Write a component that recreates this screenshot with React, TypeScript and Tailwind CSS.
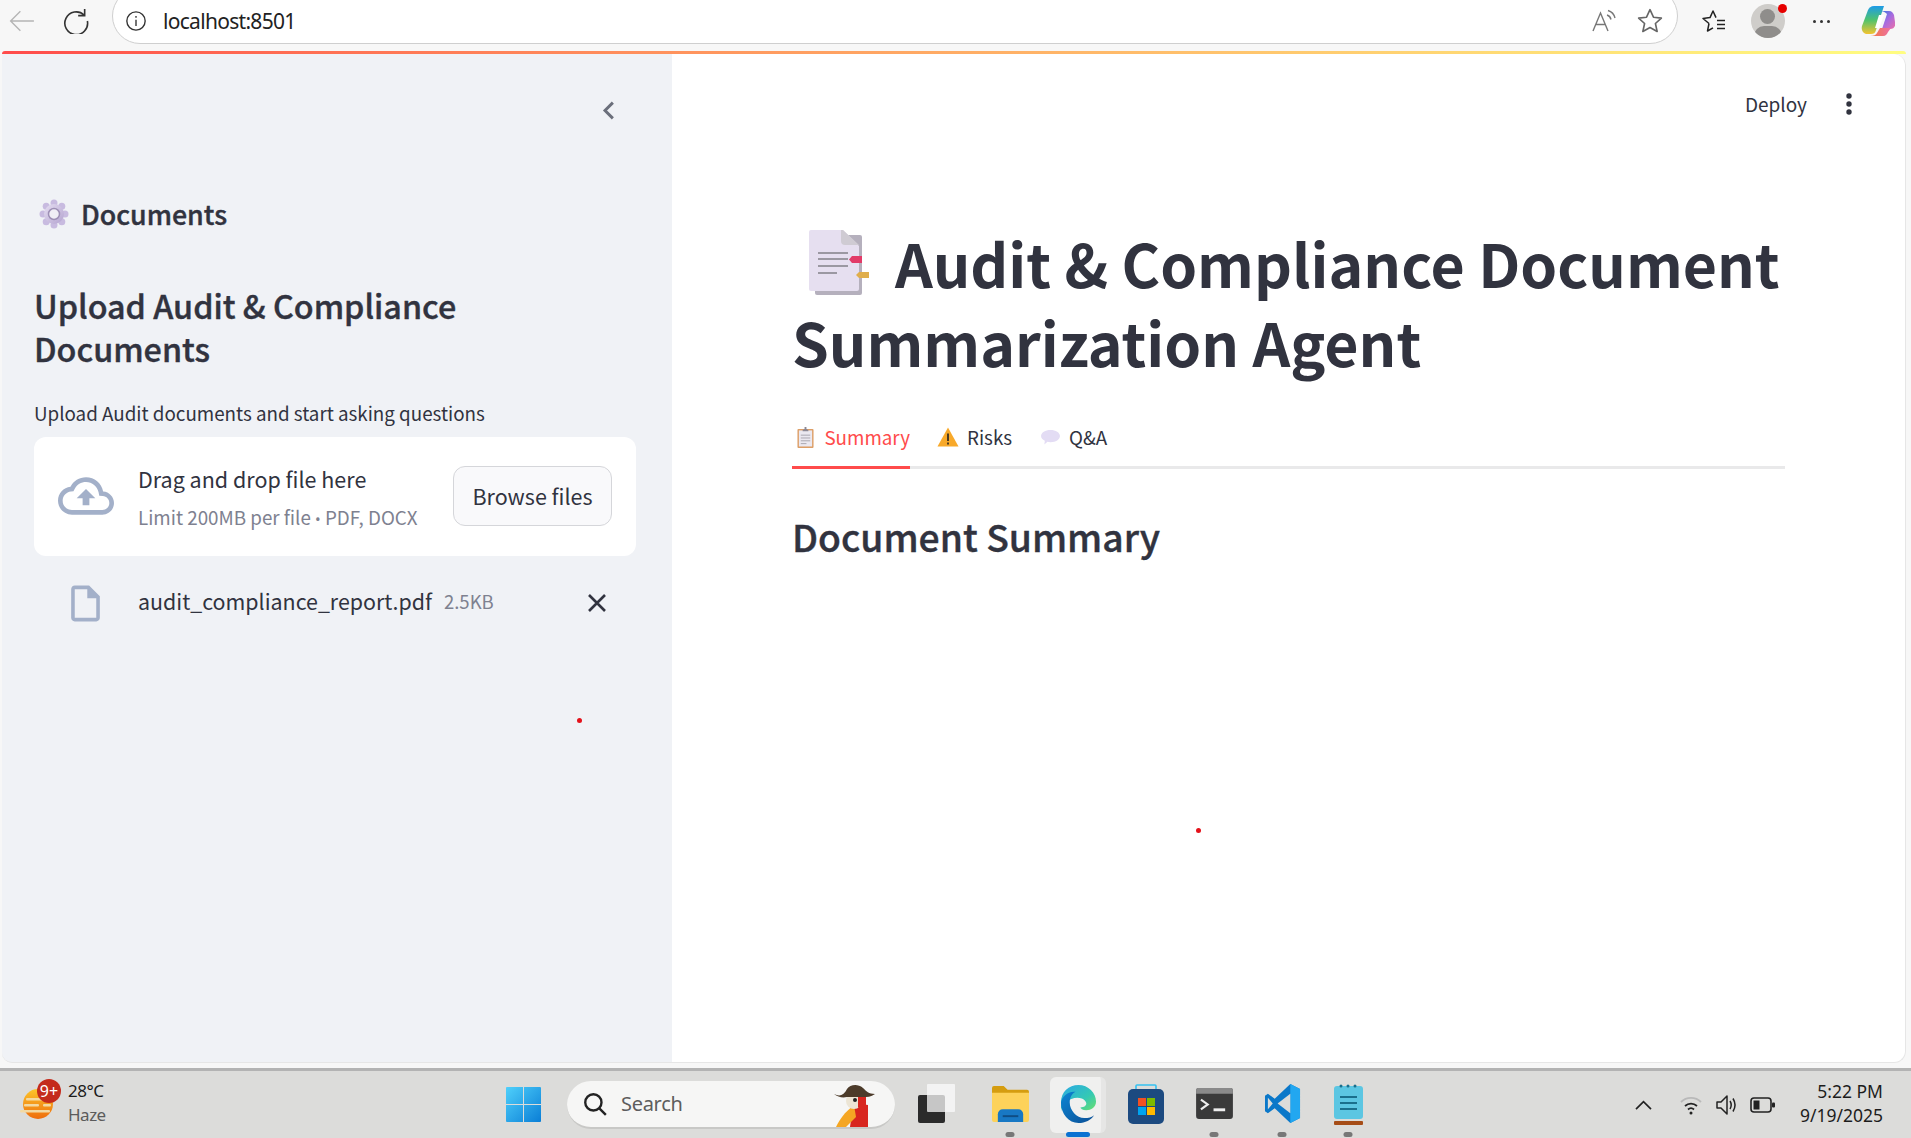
import React from "react";

function Memo({ className }: { className?: string }) {
  return (
    <svg viewBox="0 0 62 66" className={className}>
      <rect x="8" y="5" width="47" height="60" rx="2" fill="#b5b0bd" />
      <path d="M2 2a2 2 0 0 1 2-2h32l16 16v43a2 2 0 0 1-2 2H4a2 2 0 0 1-2-2z" fill="#e6dff0" />
      <path d="M34 0h2l16 15H38a4 4 0 0 1-4-4z" fill="#cfcbd3" />
      <g fill="#9b98a2">
        <rect x="11" y="22" width="30" height="2" />
        <rect x="11" y="28" width="30" height="2" />
        <rect x="11" y="35" width="30" height="2" />
        <rect x="11" y="42" width="19" height="2" />
      </g>
      <path d="M45 26h10v7H45l-3-3.500z" fill="#e23a68" />
      <path d="M52 42h12v6H52l-3-3z" fill="#e0ae4c" />
    </svg>
  );
}

function Gear({ className }: { className?: string }) {
  return (
    <svg viewBox="0 0 30 30" className={className}>
      <defs>
        <linearGradient id="g1" x1="0" y1="0" x2="1" y2="1">
          <stop offset="0" stopColor="#e6dff2" />
          <stop offset="1" stopColor="#b3a3cf" />
        </linearGradient>
      </defs>
      <g fill="#c8bbe0">
        <circle cx="15" cy="4" r="3.500" />
        <circle cx="15" cy="26" r="3.500" />
        <circle cx="4" cy="15" r="3.500" />
        <circle cx="26" cy="15" r="3.500" />
        <circle cx="7.200" cy="7.200" r="3.500" />
        <circle cx="22.800" cy="7.200" r="3.500" />
        <circle cx="7.200" cy="22.800" r="3.500" />
        <circle cx="22.800" cy="22.800" r="3.500" />
      </g>
      <circle cx="15" cy="15" r="10" fill="url(#g1)" />
      <circle cx="15" cy="15" r="5.500" fill="#f0eef5" stroke="#9d8fb5" strokeWidth="1.500" />
    </svg>
  );
}

function Clipboard() {
  return (
    <svg viewBox="0 0 18 22" className="w-[17px] h-[21px]">
      <rect x="0.500" y="2" width="17" height="20" rx="1" fill="#dd9e66" />
      <rect x="2" y="3.500" width="14" height="17" fill="#ebe8f0" />
      <path d="M6 3l2-1V0h2v2l2 1v1.500H6z" fill="#8b8794" />
      <g fill="#a7a4ad">
        <rect x="4" y="8" width="10" height="1" />
        <rect x="4" y="11" width="10" height="1" />
        <rect x="4" y="14" width="10" height="1" />
        <rect x="4" y="17" width="6" height="1" />
      </g>
    </svg>
  );
}

function Warning() {
  return (
    <svg viewBox="0 0 22 20" className="w-[22px] h-[20px]">
      <path d="M11 0.500L21.500 19.500H0.500z" fill="#f8a92a" />
      <rect x="10" y="6.500" width="2" height="7.500" fill="#4b3a22" />
      <rect x="10" y="15.500" width="2" height="2" fill="#4b3a22" />
    </svg>
  );
}

function Bubble() {
  return (
    <svg viewBox="0 0 22 18" className="w-[21px] h-[17px]">
      <path d="M11 1c5.500 0 10 2.700 10 6.500S16.500 14 11 14c-1.200 0-2.200-.1-3.200-.4L4.500 16.500 5 12.500C2.500 11.400 1 9.600 1 7.500 1 3.700 5.500 1 11 1z" fill="#e3dcf4" />
    </svg>
  );
}

function Dot({ className }: { className: string }) {
  return <span className={`block rounded-full bg-[#e4111a] w-[5px] h-[5px] ${className}`} />;
}

function Browser() {
  return (
    <div className="h-[51px] shrink-0 flex items-center bg-[#f7f7f7] relative pb-[9px]">
      <svg viewBox="0 0 24 24" className="w-[26px] h-[26px] ml-[9px] text-[#b5b5b5]" fill="none" stroke="currentColor" strokeWidth="1.300">
        <path d="M23 12H1.500M10.500 3l-9 9 9 9" />
      </svg>
      <svg viewBox="0 0 24 24" className="w-[26px] h-[26px] ml-[28px] text-[#333]" fill="none" stroke="currentColor" strokeWidth="1.500">
        <path d="M19.500 6.500A10.500 10.500 0 1 0 22.500 12" />
        <path d="M20 1v6h-6" />
      </svg>
      <div className="ml-[23px] w-[1566px] h-[56px] mt-[-11px] pt-[11px] border border-[#cfcfcf] rounded-[30px] bg-white flex items-center">
        <svg viewBox="0 0 24 24" className="w-[22px] h-[22px] ml-[12px] text-[#333]" fill="none" stroke="currentColor" strokeWidth="1.500">
          <circle cx="12" cy="12" r="10" />
          <path d="M12 10.500V17.500M12 6.500v2" />
        </svg>
        <span className="ml-[16px] text-[21px] leading-[28px] text-[#222] font-['Noto_Sans',sans-serif] tracking-[-0.7px]">localhost:8501</span>
        <svg viewBox="0 0 26 24" className="w-[26px] h-[24px] ml-auto text-[#777]" fill="none" stroke="currentColor" strokeWidth="1.400">
          <path d="M1 22L8.500 4 16 22M4 15.500h9" />
          <path d="M16 1.500c3.500 1 6 3.500 7 7.500M15 6c2 .6 3.500 2 4 4.500" />
        </svg>
        <svg viewBox="0 0 24 24" className="w-[26px] h-[26px] ml-[19px] mr-[14px] text-[#666]" fill="none" stroke="currentColor" strokeWidth="1.500" strokeLinejoin="round">
          <path d="M12 1.500l3.200 7 7.300.8-5.500 5 1.600 7.400L12 18l-6.600 3.700L7 14.300l-5.500-5 7.300-.8z" />
        </svg>
      </div>
      <svg viewBox="0 0 26 24" className="w-[26px] h-[24px] ml-[23px] text-[#222]" fill="none" stroke="currentColor" strokeWidth="1.500" strokeLinejoin="round">
        <path d="M8 14.500L2 9.500l7-.9L12 2l3 6.600M8 14.500L6.500 22l5.500-3.200" />
        <path d="M16 11.500h8M16 15.500h8M16 19.500h8" />
      </svg>
      <div className="ml-[24px] w-[34px] h-[34px] rounded-full bg-[#cfcdca] relative overflow-hidden">
        <span className="absolute left-[9px] top-[5px] w-[15px] h-[15px] rounded-full bg-[#8f8d8b]" />
        <span className="absolute left-[3px] top-[22px] w-[28px] h-[20px] rounded-full bg-[#8f8d8b]" />
      </div>
      <span className="absolute left-[1778px] top-[4px] w-[9px] h-[9px] rounded-full bg-[#e60000]" />
      <div className="ml-[28px] flex gap-[4px]">
        <span className="w-[3px] h-[3px] rounded-full bg-[#333]" />
        <span className="w-[3px] h-[3px] rounded-full bg-[#333]" />
        <span className="w-[3px] h-[3px] rounded-full bg-[#333]" />
      </div>
      <svg viewBox="0 0 34 32" className="w-[34px] h-[32px] ml-[31px]">
        <defs>
          <linearGradient id="cp1" x1="0" y1="0" x2="0" y2="1">
            <stop offset="0" stopColor="#1e9be8" />
            <stop offset="0.500" stopColor="#4fc36d" />
            <stop offset="1" stopColor="#f4c430" />
          </linearGradient>
          <linearGradient id="cp2" x1="0" y1="0" x2="1" y2="1">
            <stop offset="0" stopColor="#2a7de1" />
            <stop offset="0.500" stopColor="#a66be0" />
            <stop offset="1" stopColor="#ec6fa8" />
          </linearGradient>
          <linearGradient id="cp3" x1="0" y1="0" x2="1" y2="0">
            <stop offset="0" stopColor="#f47a3a" />
            <stop offset="1" stopColor="#ec6fa8" />
          </linearGradient>
        </defs>
        <path d="M13 1h10l-8 24c-1 3-2 4-5 4H5c-3-1-5-4-4-8L7 5c1-2 3-4 6-4z" fill="url(#cp1)" />
        <path d="M19 6h9c3 0 4 2 5 4l1 7c1 4-1 7-5 7h-8l5-15c-2-2-4-3-7-3z" fill="url(#cp2)" />
        <path d="M9 31h13c3 0 4-2 5-4l3-4h-11l-3 5c-1 2-3 3-7 3z" fill="url(#cp3)" />
        <path d="M18 10h5l-5 13h-4z" fill="#fff" />
      </svg>
    </div>
  );
}

function Sidebar() {
  return (
    <aside className="w-[670px] shrink-0 bg-[#f0f2f6] rounded-bl-[10px] border-b border-[#e6e6e6] relative">
      <div className="h-[114px] flex justify-end items-center pr-[49px]">
        <svg viewBox="0 0 24 24" className="w-[27px] h-[27px] text-[#6b6f7b] mt-[-2px]" fill="none" stroke="currentColor" strokeWidth="2.600">
          <path d="M15 5l-7 7 7 7" />
        </svg>
      </div>
      <div className="pl-[32px] pr-[36px]">
        <div className="flex items-center h-[40px] mt-[26px]">
          <Gear className="w-[30px] h-[30px] ml-[5px]" />
          <span className="ml-[12px] text-[26.8px] leading-[40px] font-medium [-webkit-text-stroke:0.4px_#31333f] text-[#31333f]">Documents</span>
        </div>
        <h2 className="mt-[50px] text-[32.3px] leading-[43px] font-medium [-webkit-text-stroke:0.4px_#31333f] text-[#31333f] whitespace-nowrap">
          Upload Audit &amp; Compliance
          <br />
          Documents
        </h2>
        <p className="mt-[27px] text-[18.8px] leading-[32px] text-[#31333f]">Upload Audit documents and start asking questions</p>
        <div className="mt-[8px] h-[119px] bg-white rounded-[12px] flex items-center">
          <svg viewBox="0 0 24 24" className="w-[56px] h-[56px] ml-[24px] mt-[-2px] text-[#a3b0c9]" fill="currentColor">
            <path d="M19.350 10.040C18.670 6.590 15.640 4 12 4 9.110 4 6.600 5.640 5.350 8.040 2.340 8.360 0 10.910 0 14c0 3.310 2.690 6 6 6h13c2.760 0 5-2.240 5-5 0-2.640-2.050-4.780-4.650-4.960zM19 18H6c-2.210 0-4-1.790-4-4 0-2.050 1.530-3.760 3.560-3.970l1.070-.11.500-.95C8.080 7.140 9.940 6 12 6c2.620 0 4.880 1.860 5.390 4.430l.3 1.500 1.530.11c1.560.1 2.780 1.410 2.780 2.960 0 1.650-1.350 3-3 3zM8 13h2.550v3h2.900v-3H16l-4-4z" />
          </svg>
          <div className="ml-[24px] flex flex-col pt-[4px]">
            <span className="text-[21.5px] leading-[32px] text-[#31333f]">Drag and drop file here</span>
            <span className="mt-[6px] text-[18.8px] leading-[32px] text-[#7e8190]">
              Limit 200MB per file <span className="font-['Noto_Sans',sans-serif] text-[15px]">•</span> PDF, DOCX
            </span>
          </div>
          <button className="ml-auto mr-[24px] w-[159px] h-[60px] mt-[-2px] rounded-[12px] border border-[#d5d6da] bg-[#f9f9fb] text-[21.5px] leading-[32px] text-[#31333f]">Browse files</button>
        </div>
        <div className="mt-[25px] h-[44px] flex items-center">
          <svg viewBox="0 0 24 24" className="w-[43px] h-[43px] ml-[30px] text-[#a3b0c9]" fill="currentColor">
            <path d="M14 2H6c-1.100 0-1.990.9-1.990 2L4 20c0 1.100.89 2 1.990 2H18c1.100 0 2-.9 2-2V8l-6-6zM6 20V4h7v5h5v11H6z" />
          </svg>
          <span className="ml-[31px] mt-[-4px] text-[21.4px] leading-[32px] text-[#31333f]">audit_compliance_report.pdf</span>
          <span className="ml-[12px] mt-[-4px] text-[18.5px] leading-[32px] text-[#7e8190]">2.5KB</span>
          <svg viewBox="0 0 24 24" className="w-[24px] h-[24px] ml-auto mr-[27px] text-[#31333f]" fill="none" stroke="currentColor" strokeWidth="2.600">
            <path d="M4 4l16 16M20 4L4 20" />
          </svg>
        </div>
      </div>
      <Dot className="absolute left-[575px] top-[664px]" />
    </aside>
  );
}

function Tab({ icon, label, active, className }: { icon: React.ReactNode; label: string; active?: boolean; className?: string }) {
  return (
    <div className={`flex items-center h-[61px] border-b-[3px] -mb-[3px] ${active ? "border-[#ff4b4b] text-[#ff4b4b]" : "border-transparent text-[#31333f]"} ${className ?? ""}`}>
      <span className="flex items-center justify-center w-[22px]">{icon}</span>
      <span className="ml-[8px] text-[18.8px] leading-[32px]">{label}</span>
    </div>
  );
}

function Main() {
  return (
    <main className="flex-1 bg-white rounded-tr-[12px] rounded-br-[12px] border-r border-b border-[#e6e6e6] relative min-w-0">
      <header className="h-[100px] flex items-center justify-end">
        <span className="text-[19px] leading-[30px] text-[#31333f]">Deploy</span>
        <svg viewBox="0 0 6 22" className="w-[6px] h-[22px] ml-[39px] mr-[53px] text-[#31333f]" fill="currentColor">
          <circle cx="3" cy="3" r="2.700" />
          <circle cx="3" cy="11" r="2.700" />
          <circle cx="3" cy="19" r="2.700" />
        </svg>
      </header>
      <div className="pl-[120px] pr-[120px] pt-[69px]">
        <h1 className="text-[59px] leading-[79px] font-bold text-[#31333f] whitespace-nowrap">
          <Memo className="inline-block w-[62px] h-[66px] ml-[15px] mr-[26px] align-[-8px]" />
          Audit &amp; Compliance Document
          <br />
          Summarization Agent
        </h1>
        <div className="mt-[27px] flex border-b-[3px] border-[#e9e9ea]">
          <Tab active icon={<Clipboard />} label="Summary" className="pl-[3px] w-[118px]" />
          <Tab icon={<Warning />} label="Risks" className="ml-[27px]" />
          <Tab icon={<Bubble />} label="Q&A" className="ml-[27px]" />
        </div>
        <h2 className="mt-[42px] text-[37.3px] leading-[50px] font-medium [-webkit-text-stroke:0.4px_#31333f] text-[#31333f]">Document Summary</h2>
      </div>
      <Dot className="absolute left-[524px] top-[774px]" />
    </main>
  );
}

function Win() {
  return (
    <svg viewBox="0 0 36 38" className="w-[35px] h-[37px]">
      <defs>
        <linearGradient id="w1" x1="0" y1="0" x2="1" y2="1">
          <stop offset="0" stopColor="#4fd0fb" />
          <stop offset="1" stopColor="#0a7ed6" />
        </linearGradient>
      </defs>
      <path d="M1 1h16.500v17.500H0V2a1 1 0 0 1 1-1zM18.500 1H35a1 1 0 0 1 1 1v16.500H18.500zM0 19.500h17.500V37H1a1 1 0 0 1-1-1zM18.500 19.500H36V36a1 1 0 0 1-1 1H18.500z" fill="url(#w1)" />
    </svg>
  );
}

function TaskIcon({ children, pip, active, w }: { children: React.ReactNode; pip?: boolean; active?: boolean; w?: string }) {
  return (
    <div className={`relative h-[64px] mt-[-2px] flex items-center justify-center ${w ?? "w-[68px]"}`}>
      {active && <span className="absolute left-[6px] right-[6px] top-[5px] bottom-[3px] bg-[#f0f0ef] rounded-[6px] border-r-[5px] border-[#e6e6e5]" />}
      <span className="relative flex">{children}</span>
      {pip && <span className="absolute bottom-[-1px] left-1/2 -translate-x-1/2 w-[9px] h-[5px] rounded-full bg-[#777]" />}
      {active && <span className="absolute bottom-[-1px] left-1/2 -translate-x-1/2 w-[24px] h-[5px] rounded-full bg-[#0a72d2]" />}
    </div>
  );
}

function Taskbar() {
  return (
    <footer className="h-[70px] shrink-0 border-t-[3px] border-[#b3b3b3] bg-[#dcdcda] flex items-center font-['Noto_Sans',sans-serif] text-[#1c1c1c]">
      <div className="relative w-[68px] h-full shrink-0">
        <svg viewBox="0 0 34 34" className="absolute left-[20px] top-[18px] w-[34px] h-[34px]">
          <defs>
            <linearGradient id="sun" x1="0" y1="0" x2="0" y2="1">
              <stop offset="0" stopColor="#fcc52a" />
              <stop offset="1" stopColor="#ee6d0d" />
            </linearGradient>
          </defs>
          <circle cx="18" cy="15" r="15" fill="url(#sun)" />
          <g fill="#f3d9a2">
            <rect x="6" y="9" width="24" height="2.500" rx="1" />
            <rect x="4" y="15" width="15" height="2.500" rx="1" />
            <rect x="23" y="15" width="8" height="2.500" rx="1" />
            <rect x="0" y="21" width="30" height="2.500" rx="1" />
          </g>
        </svg>
        <span className="absolute left-[37px] top-[8px] w-[24px] h-[24px] rounded-full bg-[#c42b1c] text-white text-[16px] leading-[24px] text-center">9+</span>
      </div>
      <div className="flex flex-col w-[438px] shrink-0 mt-[-3px]">
        <span className="text-[17px] leading-[24px] tracking-[-0.5px]">28°C</span>
        <span className="text-[17px] leading-[24px] tracking-[-0.5px] text-[#5b5b5b]">Haze</span>
      </div>
      <Win />
      <div className="ml-[26px] w-[328px] h-[48px] rounded-full bg-[#f6f6f5] border-b-2 border-[#c8c8c6] flex items-center shrink-0 relative">
        <svg viewBox="0 0 24 24" className="w-[26px] h-[26px] ml-[15px] text-[#222]" fill="none" stroke="currentColor" strokeWidth="2.200">
          <circle cx="10.500" cy="10.500" r="7.500" />
          <path d="M16 16l6 6" />
        </svg>
        <span className="ml-[13px] text-[20px] leading-[28px] text-[#5d5d5d] tracking-[-0.3px]">Search</span>
        <svg viewBox="0 0 42 44" className="absolute right-[19px] top-[2px] w-[42px] h-[44px]">
          <path d="M16 44C18 34 16 26 20 20l14 2v22z" fill="#d8261f" />
          <path d="M2 44c4-8 8-14 18-22l2 12-10 10z" fill="#f5a623" />
          <circle cx="20" cy="18" r="8" fill="#ece5d5" />
          <circle cx="21" cy="17" r="2" fill="#222" />
          <path d="M24 14h8v10l-4 6-4-6z" fill="#d8261f" />
          <path d="M0 11c6 3 10 1 13-5 3-4 10-6 16-1 3 3 6 6 12 6-4 3-8 3-12 3H13c-5 1-9 0-13-3z" fill="#4c3b2a" />
        </svg>
      </div>
      <div className="ml-[2px] flex items-center shrink-0">
        <TaskIcon w="w-[79px]">
          <svg viewBox="0 0 38 40" className="w-[38px] h-[40px]">
            <rect x="0" y="11" width="27" height="28" rx="2" fill="#2b2b2b" />
            <rect x="9" y="0" width="28" height="28" rx="1" fill="#fbfbfb" fillOpacity="0.750" />
          </svg>
        </TaskIcon>
        <TaskIcon pip>
          <svg viewBox="0 0 38 38" className="w-[37px] h-[37px]">
            <path d="M0 3a2 2 0 0 1 2-2h10l4 4h20a2 2 0 0 1 2 2v4H0z" fill="#d59d10" />
            <path d="M0 8h38v28a2 2 0 0 1-2 2H2a2 2 0 0 1-2-2z" fill="#fdd25a" />
            <path d="M6 38V30a5 5 0 0 1 5-5h16a5 5 0 0 1 5 5v8z" fill="#1878c4" />
            <rect x="11" y="31" width="16" height="2" fill="#0f4d85" />
          </svg>
        </TaskIcon>
        <TaskIcon active>
          <svg viewBox="0 0 38 42" className="w-[37px] h-[41px]">
            <defs>
              <linearGradient id="ed1" x1="0" y1="0" x2="1" y2="1">
                <stop offset="0" stopColor="#2aa8e6" />
                <stop offset="0.600" stopColor="#34c9b4" />
                <stop offset="1" stopColor="#6fe06a" />
              </linearGradient>
              <linearGradient id="ed2" x1="0" y1="0" x2="1" y2="1">
                <stop offset="0" stopColor="#0c86d4" />
                <stop offset="1" stopColor="#0c4f96" />
              </linearGradient>
            </defs>
            <path d="M1 20C1 9 9 2 19 2c10 0 18 8 18 17 0 6-5 9-10 9-4 0-6-2-6-3 4 0 6-2 6-4 0-3-4-6-9-6-9 0-16 7-17 14z" fill="url(#ed1)" />
            <path d="M1 20c1-6 7-12 15-11-4 2-6 6-6 11 0 8 7 16 15 16 4 0 8-1 10-3-3 5-9 8-16 8C9 41 1 32 1 20z" fill="url(#ed2)" />
          </svg>
        </TaskIcon>
        <TaskIcon>
          <svg viewBox="0 0 36 40" className="w-[36px] h-[40px]">
            <path d="M8 6V2a1 1 0 0 1 1-1h18a1 1 0 0 1 1 1v4" fill="none" stroke="#35c1f1" strokeWidth="1.600" />
            <rect x="0" y="5" width="36" height="35" rx="5" fill="#1c4a80" />
            <rect x="10" y="14" width="8" height="8" fill="#f25022" />
            <rect x="19" y="14" width="8" height="8" fill="#7fba00" />
            <rect x="10" y="23" width="8" height="8" fill="#00a4ef" />
            <rect x="19" y="23" width="8" height="8" fill="#ffb900" />
          </svg>
        </TaskIcon>
        <TaskIcon pip>
          <svg viewBox="0 0 38 32" className="w-[37px] h-[31px]">
            <rect width="38" height="32" rx="3" fill="#3a3a3a" />
            <path d="M2 0h34a2 2 0 0 1 2 2v4H0V2a2 2 0 0 1 2-2z" fill="#8a8a8a" />
            <path d="M5 12l7 5-7 5" stroke="#eee" strokeWidth="2.200" fill="none" />
            <rect x="18" y="21" width="12" height="3" fill="#eee" />
          </svg>
        </TaskIcon>
        <TaskIcon pip>
          <svg viewBox="0 0 38 42" className="w-[37px] h-[41px]">
            <path d="M27 1l10 5v30l-10 5-16-15-7 5-3-2V13l3-2 7 5z" fill="#0b78c9" />
            <path d="M27 1l10 5v30l-10 5z" fill="#22a7f0" />
            <path d="M27 11v20L14 21z" fill="#dcdcda" />
            <path d="M4 15l5 6-5 6z" fill="#dcdcda" />
          </svg>
        </TaskIcon>
        <TaskIcon pip w="w-[64px]">
          <svg viewBox="0 0 29 42" className="w-[29px] h-[42px]">
            <rect y="3" width="29" height="33" rx="3" fill="#5cc6e2" />
            <g fill="#1a6f8c">
              <circle cx="7" cy="3" r="1.500" />
              <circle cx="14" cy="3" r="1.500" />
              <circle cx="21" cy="3" r="1.500" />
              <rect x="6" y="13" width="17" height="2" />
              <rect x="6" y="19" width="17" height="2" />
              <rect x="6" y="25" width="17" height="2" />
            </g>
            <rect y="38" width="29" height="4" rx="1" fill="#a64d17" />
          </svg>
        </TaskIcon>
      </div>
      <div className="ml-auto flex items-center shrink-0 pr-[28px]">
        <svg viewBox="0 0 20 12" className="w-[17px] h-[10px] text-[#222]" fill="none" stroke="currentColor" strokeWidth="2">
          <path d="M1 11l9-9 9 9" />
        </svg>
        <svg viewBox="0 0 24 20" className="w-[24px] h-[20px] ml-[27px] text-[#222]" fill="none" stroke="currentColor" strokeWidth="1.800">
          <path d="M6 11c3.500-3.200 8.500-3.200 12 0M9 14.500c1.800-1.600 4.200-1.600 6 0" />
          <path d="M2 7C7.500 1.500 16.500 1.500 22 7" stroke="#b9b9b9" />
          <circle cx="12" cy="18" r="1.500" fill="#222" stroke="none" />
        </svg>
        <svg viewBox="0 0 24 22" className="w-[24px] h-[22px] ml-[13px] text-[#222]" fill="none" stroke="currentColor" strokeWidth="1.500" strokeLinejoin="round">
          <path d="M1 8v6h4l6 6V2L5 8z" />
          <path d="M14 7c1.500 2.500 1.500 5.500 0 8M17 4.500c2.500 4 2.500 9 0 13" />
        </svg>
        <svg viewBox="0 0 26 16" className="w-[26px] h-[16px] ml-[10px] text-[#222]">
          <rect x="1" y="1" width="20" height="14" rx="3" fill="none" stroke="currentColor" strokeWidth="1.600" />
          <rect x="3.500" y="3.500" width="6" height="9" fill="currentColor" />
          <rect x="22" y="5.500" width="3" height="5" rx="1" fill="currentColor" />
        </svg>
        <div className="ml-[24px] flex flex-col items-end text-[17.500px] leading-[24px] mt-[-3px]">
          <span>5:22 PM</span>
          <span>9/19/2025</span>
        </div>
      </div>
    </footer>
  );
}

export default function App() {
  return (
    <div className="w-[1911px] h-[1138px] overflow-hidden flex flex-col bg-[#f7f7f7] font-['Noto_Sans_CJK_SC','Noto_Sans',sans-serif]">
      <Browser />
      <div className="flex-1 min-h-0 flex flex-col pl-[2px] pr-[5px] pb-[5px]">
        <div className="h-[3px] shrink-0 rounded-tr-[6px] rounded-tl-[6px] bg-gradient-to-r from-[#ff4b4b] to-[#fffd80]" />
        <div className="flex-1 min-h-0 flex">
          <Sidebar />
          <Main />
        </div>
      </div>
      <Taskbar />
    </div>
  );
}
